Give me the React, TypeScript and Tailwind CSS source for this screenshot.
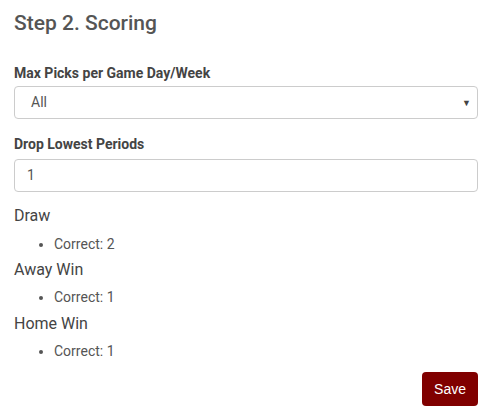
import React from "react";

export default function App() {
  return (
    <div className="w-[498px] h-[420px] bg-white pl-[14px] pr-[20px] text-[#555555]" style={{ fontFamily: "Roboto, 'Liberation Sans', sans-serif" }}>
      <h3 className="pt-[12px] text-[21px] leading-[22px] font-medium text-[#555555]">Step 2. Scoring</h3>
      <div className="mt-[29px]">
        <label className="block text-[14px] leading-[20px] font-bold text-[#444444]">Max Picks per Game Day/Week</label>
        <div className="relative mt-[3px] h-[33px] border border-[#cccccc] rounded-[4px] flex items-center pl-[16px] text-[14px] text-[#555555]">
          <span>All</span>
          <span className="absolute right-[6px] top-[10px] text-[9px] text-[#444444]">▼</span>
        </div>
      </div>
      <div className="mt-[15px]">
        <label className="block text-[14px] leading-[20px] font-bold text-[#444444]">Drop Lowest Periods</label>
        <div className="mt-[5px] h-[33px] border border-[#cccccc] rounded-[4px] flex items-center pl-[12px] text-[14px] text-[#555555]">
          1
        </div>
      </div>
      <div className="mt-[13px]">
        <h4 className="text-[16px] leading-[22px] font-normal text-[#444444]">Draw</h4>
        <ul className="list-disc pl-[40px] mt-[7px] text-[14px] leading-[20px]">
          <li>Correct: 2</li>
        </ul>
      </div>
      <div className="mt-[5px]">
        <h4 className="text-[16px] leading-[22px] font-normal text-[#444444]">Away Win</h4>
        <ul className="list-disc pl-[40px] mt-[6px] text-[14px] leading-[20px]">
          <li>Correct: 1</li>
        </ul>
      </div>
      <div className="mt-[6px]">
        <h4 className="text-[16px] leading-[22px] font-normal text-[#444444]">Home Win</h4>
        <ul className="list-disc pl-[40px] mt-[6px] text-[14px] leading-[20px]">
          <li>Correct: 1</li>
        </ul>
      </div>
      <div className="flex justify-end mt-[11px]">
        <button className="h-[34px] px-[12px] bg-[#800000] text-white rounded-[4px] text-[14px]" style={{ fontFamily: "'Liberation Sans', Arial, sans-serif" }}>Save</button>
      </div>
    </div>
  );
}
